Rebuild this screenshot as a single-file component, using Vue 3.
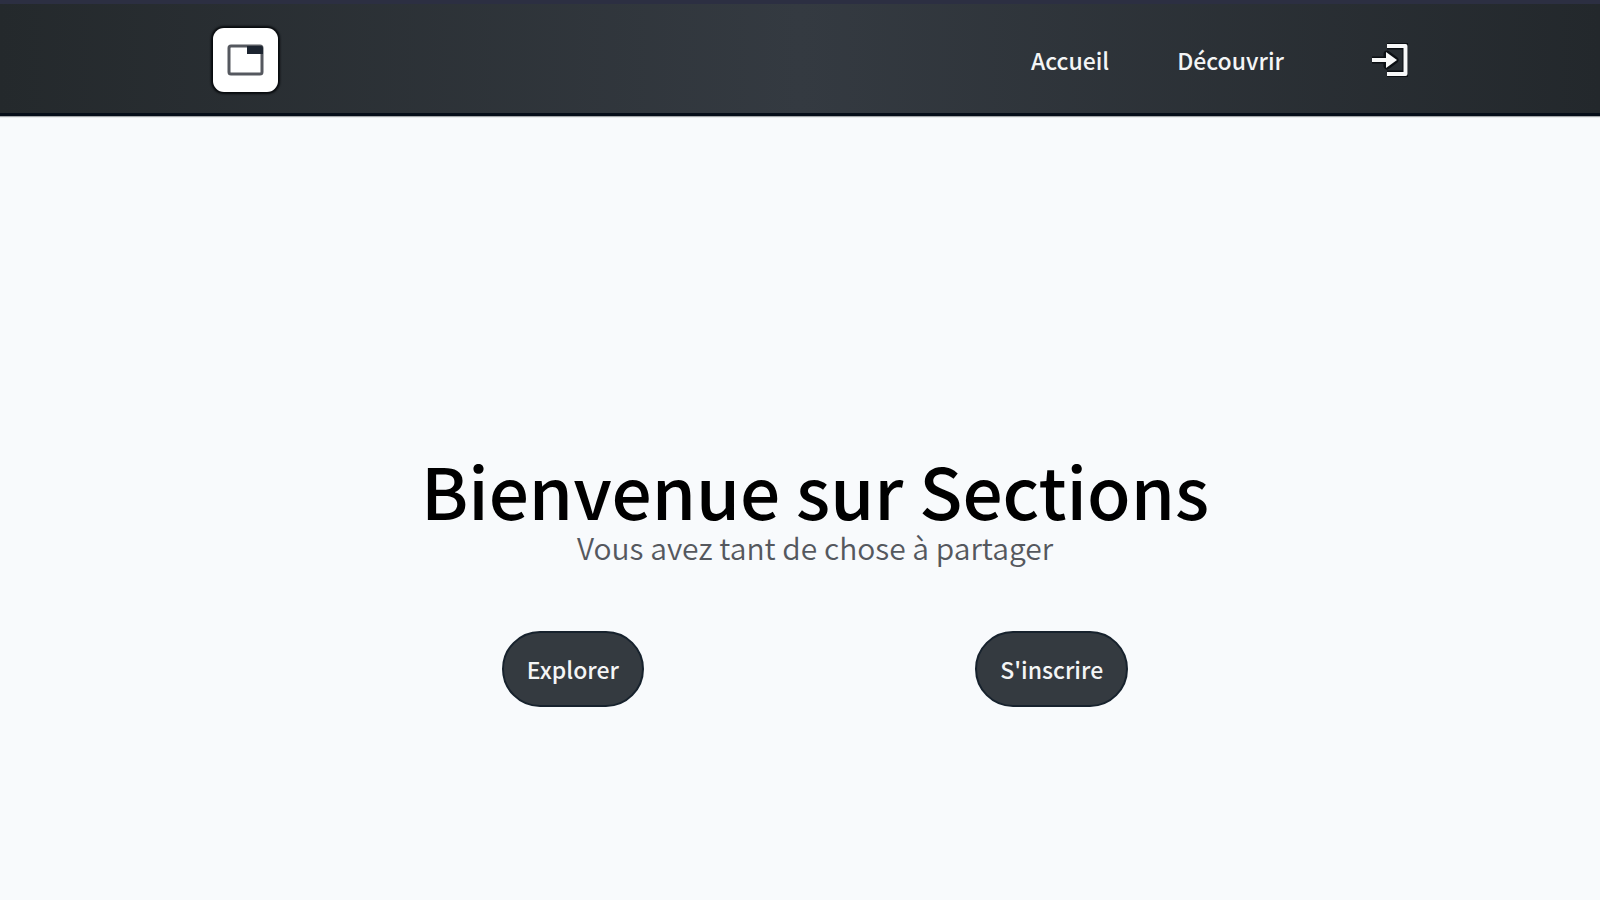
<script setup>
const links = [
  { label: 'Accueil', href: '#accueil' },
  { label: 'Découvrir', href: '#decouvrir' },
]
const actions = [
  { label: 'Explorer', id: 'explore' },
  { label: "S'inscrire", id: 'register' },
]
</script>

<template>
  <div class="page">
    <header class="topbar">
      <a class="logo" href="#accueil" aria-label="Sections">
        <svg viewBox="0 0 38 32" width="38" height="32" aria-hidden="true">
          <rect x="2" y="2" width="33" height="28" rx="2" fill="#fff" stroke="#55585f" stroke-width="3" />
          <path d="M20 2h14a2 2 0 0 1 2 2v6H20z" fill="#1c2430" />
        </svg>
      </a>
      <nav class="nav" aria-label="Navigation principale">
        <a v-for="link in links" :key="link.href" class="nav-link" :href="link.href">{{ link.label }}</a>
        <a class="login" href="#connexion" aria-label="Connexion">
          <svg viewBox="0 0 36 34" width="36" height="34" aria-hidden="true">
            <g fill="none" stroke="#0b0f13" stroke-linejoin="round">
              <path d="M15 3h19v28H15" stroke-width="7" />
              <path d="M0 17h16M15 11l8 6-8 6z" stroke-width="7" />
            </g>
            <path d="M15 3h18.500v28H15" fill="none" stroke="#f7f8f8" stroke-width="4" stroke-linejoin="round" />
            <path d="M0 15h14V9l11 8-11 8v-6H0z" fill="#f7f8f8" />
          </svg>
        </a>
      </nav>
    </header>
    <main class="hero">
      <h1 class="title">Bienvenue sur Sections</h1>
      <p class="subtitle">Vous avez tant de chose à partager</p>
      <div class="actions">
        <button v-for="action in actions" :key="action.id" class="action" type="button">{{ action.label }}</button>
      </div>
    </main>
  </div>
</template>

<style>
body {
  margin: 0;
  background: #f8fafc;
}
</style>

<style scoped>
.page {
  display: flex;
  flex-direction: column;
  min-height: 100vh;
  background: #f8fafc;
  font-family: "Noto Sans CJK SC", "Noto Sans", sans-serif;
}
.topbar {
  display: flex;
  align-items: center;
  justify-content: space-between;
  box-sizing: border-box;
  min-height: 116px;
  padding: 3px 12% 0 213px;
  border-top: 4px solid #2c2f42;
  border-bottom: 3px solid #050d18;
  background: linear-gradient(90deg, #24292c, #343a41 50%, #23282c);
  box-shadow: 0 1px 1px #a2a5a8;
}
.logo {
  display: flex;
  align-items: center;
  justify-content: center;
  width: 65px;
  height: 64px;
  border-radius: 11px;
  background: #fff;
  box-shadow: 0 0 2px 2px #080b0e;
}
.nav {
  display: flex;
  align-items: center;
}
.nav-link {
  margin-right: 68px;
  color: #f4f5f6;
  font-size: 23px;
  font-weight: 500;
  line-height: 36px;
  text-decoration: none;
}
.login {
  display: flex;
  margin-left: 20px;
}
.hero {
  display: flex;
  flex: 1;
  flex-direction: column;
  align-items: center;
  padding: 329px 0 64px 30px;
}
.title {
  margin: 0;
  color: #000;
  font-size: 71px;
  font-weight: 500;
  line-height: 88px;
}
.subtitle {
  margin: 0;
  color: #55585e;
  font-size: 30px;
  font-weight: 350;
  line-height: 28px;
}
.actions {
  display: flex;
  justify-content: space-around;
  width: 61%;
  margin-top: 70px;
}
.action {
  padding: 19px 23px;
  border: 2px solid #17222d;
  border-radius: 38px;
  background: #343a40;
  color: #f4f5f6;
  font-family: inherit;
  font-size: 23px;
  font-weight: 500;
  line-height: 34px;
}
</style>
